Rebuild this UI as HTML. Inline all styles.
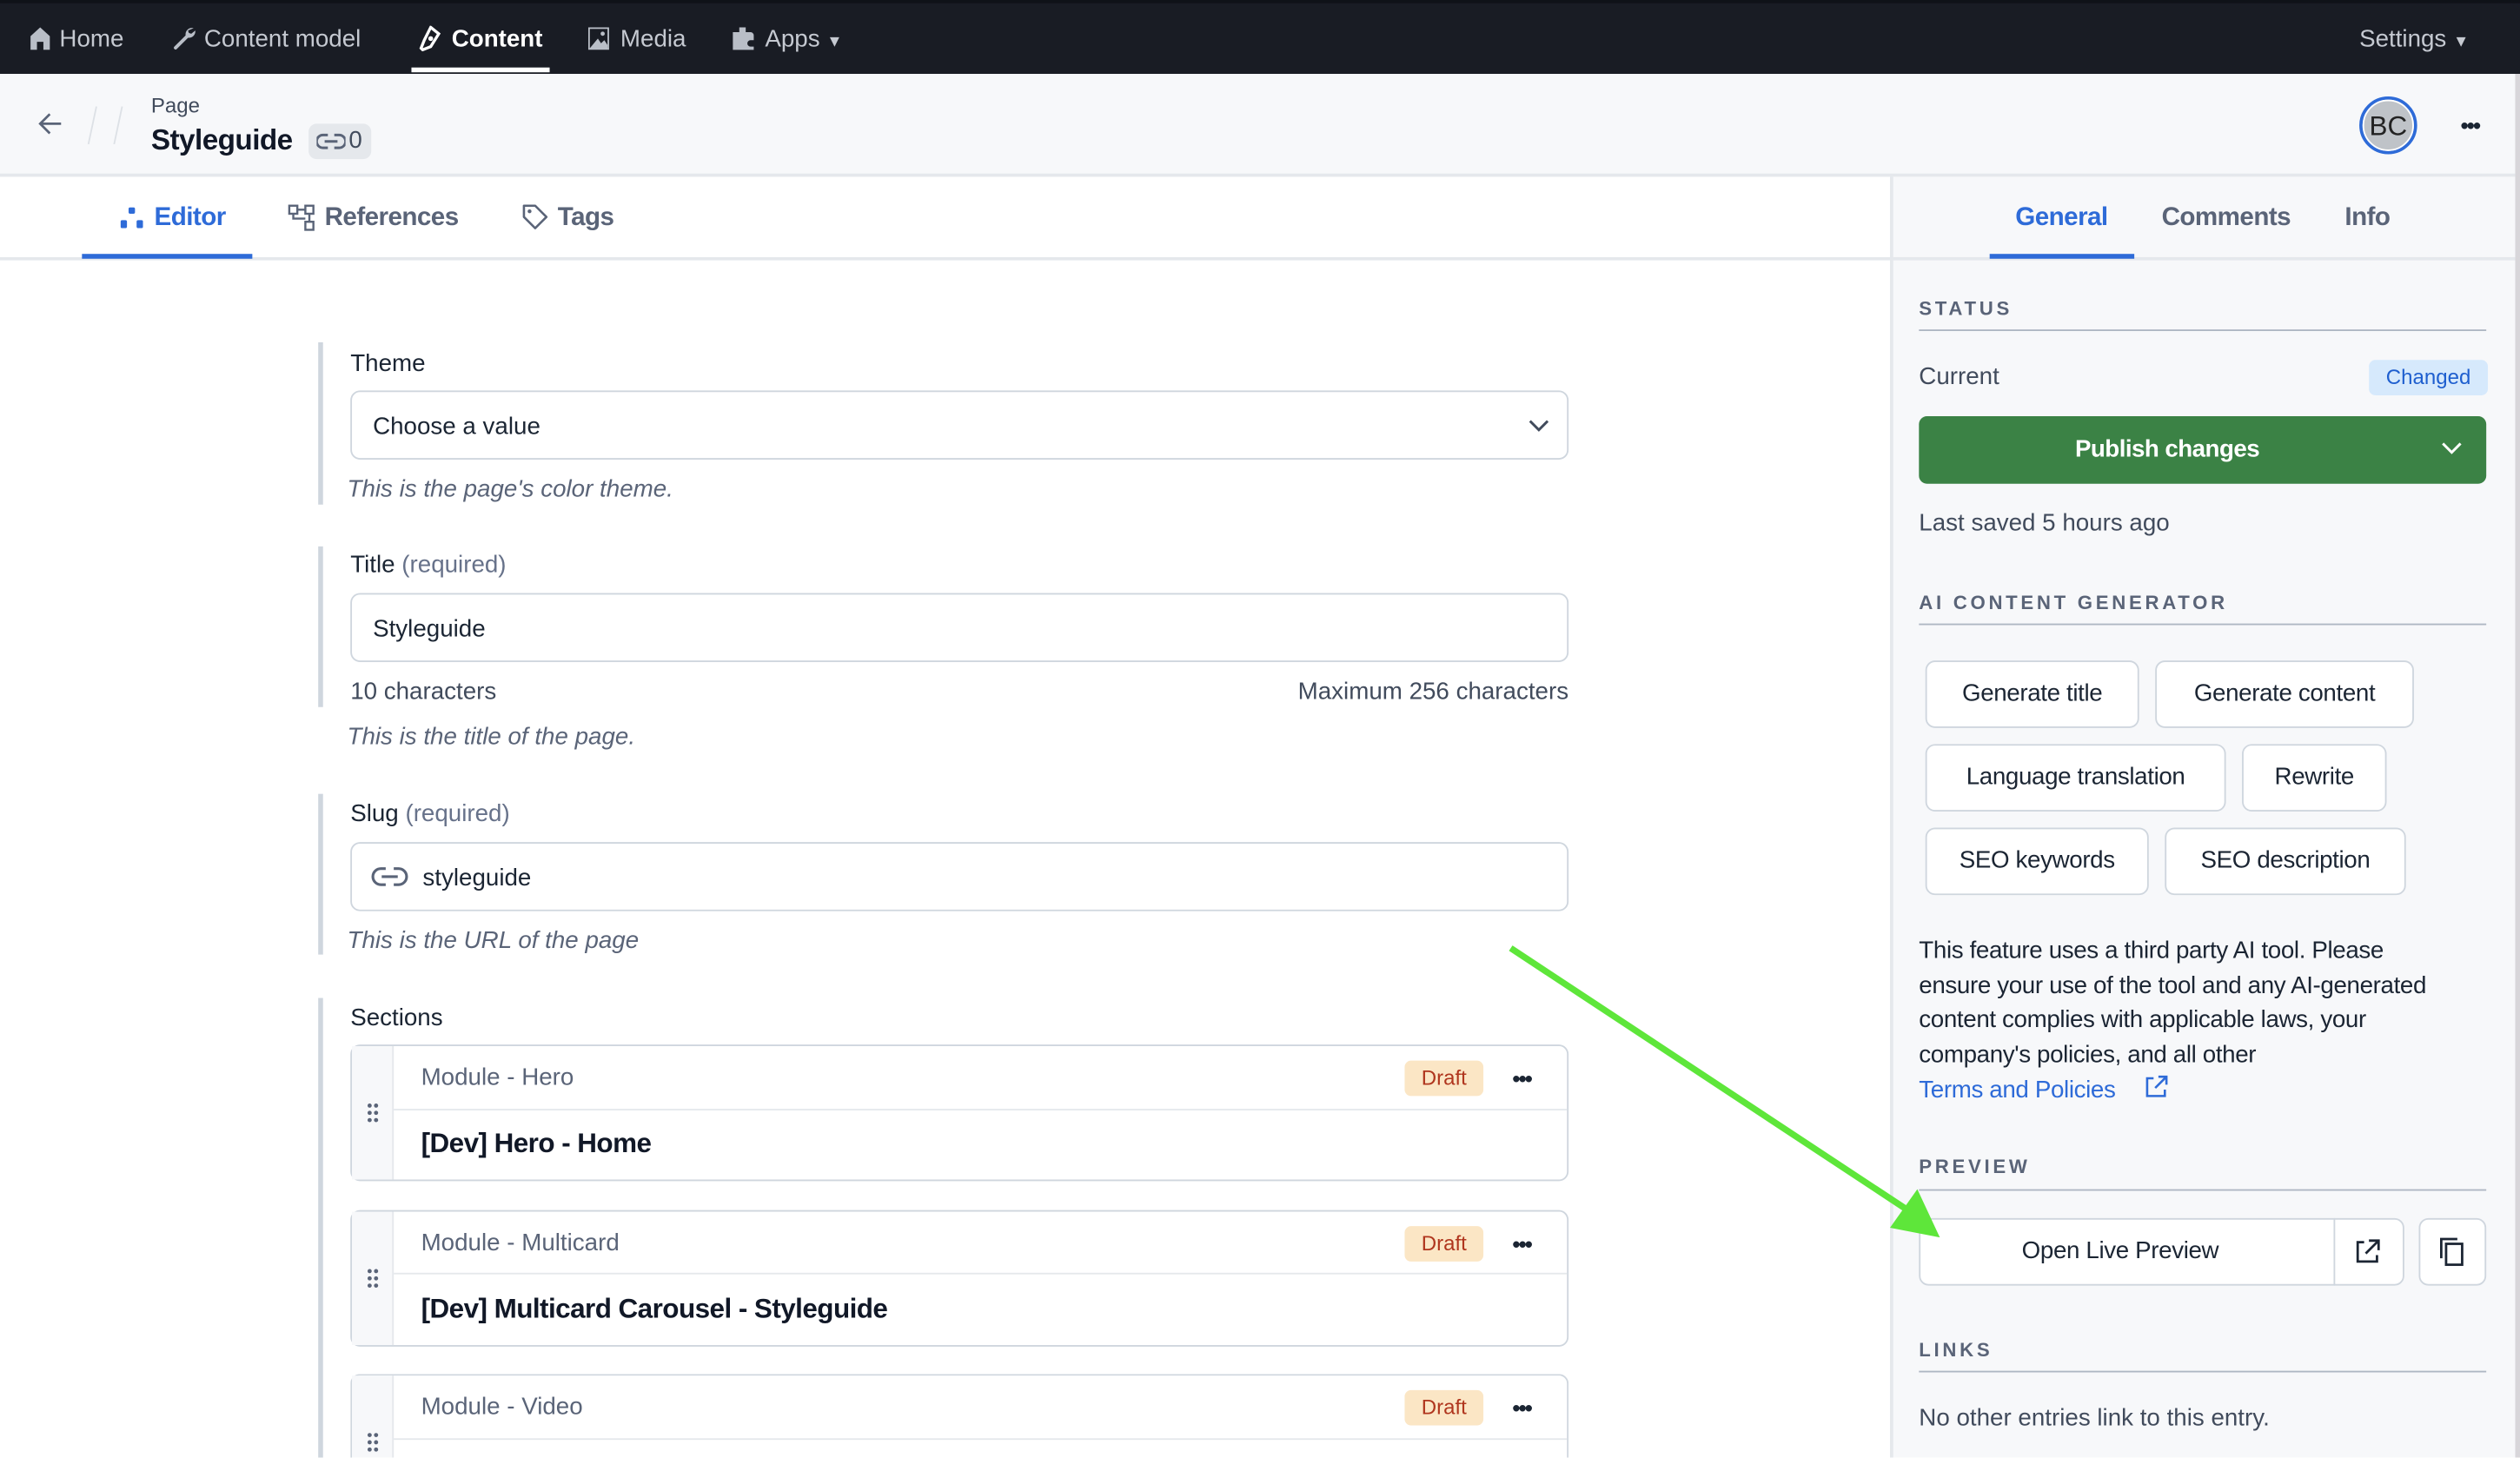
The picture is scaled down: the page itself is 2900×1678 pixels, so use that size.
<!DOCTYPE html>
<html><head><meta charset="utf-8"><style>
*{box-sizing:border-box;margin:0;padding:0}
html,body{width:2900px;height:1678px;overflow:hidden;background:#fff}
#w{position:absolute;left:0;top:0;width:1568px;height:907px;transform:scale(1.8495);transform-origin:0 0;font-family:"Liberation Sans",sans-serif;color:#1b2533;font-size:15px;overflow:hidden}
.a{position:absolute;white-space:nowrap}
.nav{background:#191c24;left:0;top:0;width:1568px;height:46px;border-top:2px solid #0f1218}
.nv{color:#c5c9d1;font-size:15px;top:16px}
.lbl{font-size:15px;color:#1b2533}
.req{color:#67728a}
.help{font-style:italic;color:#5a6478;font-size:15px}
.inp{border:1px solid #cfd6de;border-radius:6px;background:#fff;height:43px}
.btn{border:1px solid #cfd6de;border-radius:6px;background:#fff;height:42px;font-size:15px;text-align:center;line-height:40px;color:#1b2533;letter-spacing:-0.2px}
.card{left:218px;width:758px;border:1px solid #cfd6de;border-radius:6px;background:#fff;overflow:hidden}
.draft{background:#fbe6c5;color:#b0361e;font-size:13px;border-radius:4px;width:49px;text-align:center;height:22px;line-height:22px}
.sec{font-size:12px;letter-spacing:2px;color:#5a6478;font-weight:bold}
.hl{height:1px;background:#aeb7c3}
.dots{font-size:14px;font-weight:bold;letter-spacing:-1px;line-height:10px}
</style></head><body><div id="w">
<div class="a nav"></div>
<svg class="a" style="left:18px;top:16px" width="14" height="15" viewBox="0 0 14 15"><path d="M7 1L1 6.5V15H5V10H9V15H13V6.5Z" fill="#b9bec7"/></svg>
<div class="a nv" style="left:37px">Home</div>
<svg class="a" style="left:107px;top:16px" width="15" height="15" viewBox="0 0 15 15"><path d="M13.5 1.5a4 4 0 0 0-5 4.5L1.5 13a1 1 0 0 0 1.5 1.5L10 7.5a4 4 0 0 0 4.5-4.5L12 5 10.5 4.5 10 3z" fill="#b9bec7"/></svg>
<div class="a nv" style="left:127px">Content model</div>
<svg class="a" style="left:260px;top:16px" width="15" height="16" viewBox="0 0 15 16"><path d="M8 1L13 5 8 13 3 15 2 14 4 9Z" fill="none" stroke="#fff" stroke-width="1.8"/><circle cx="8" cy="8" r="1.5" fill="#fff"/></svg>
<div class="a nv" style="left:281px;color:#fff;font-weight:bold">Content</div>
<div class="a" style="left:256px;top:42px;width:86px;height:3px;background:#fff"></div>
<svg class="a" style="left:366px;top:17px" width="13" height="14" viewBox="0 0 13 14"><rect x="0.5" y="0.5" width="12" height="13" fill="none" stroke="#b9bec7"/><path d="M1 13L6 7 8 10 10 8 12 11V13Z" fill="#b9bec7"/><circle cx="9" cy="4" r="1.3" fill="#b9bec7"/></svg>
<div class="a nv" style="left:386px">Media</div>
<svg class="a" style="left:455px;top:16px" width="15" height="16" viewBox="0 0 15 16"><path d="M5 1h4v3h3a2 2 0 0 1 2 2v3h-2a2 2 0 0 0 0 4h2v2H1V4h4z" fill="#b9bec7"/></svg>
<div class="a nv" style="left:476px">Apps <span style="font-size:10px">▼</span></div>
<div class="a nv" style="left:1468px">Settings <span style="font-size:10px">▼</span></div>
<div class="a" style="left:0;top:46px;width:1565px;height:64px;background:#f7f8fa;border-bottom:2px solid #e5e8ec"></div>
<div class="a" style="left:1565px;top:46px;width:3px;height:861px;background:#d8d6da"></div>
<svg class="a" style="left:23px;top:69px" width="16" height="16" viewBox="0 0 16 16"><path d="M15 8H2M8 2L2 8l6 6" fill="none" stroke="#5a6478" stroke-width="1.5"/></svg>
<div class="a" style="left:57px;top:66px;width:1px;height:24px;background:#dde1e6;transform:rotate(12deg)"></div>
<div class="a" style="left:73px;top:66px;width:1px;height:24px;background:#dde1e6;transform:rotate(12deg)"></div>
<div class="a" style="left:94px;top:58px;font-size:13px;color:#414b5c">Page</div>
<div class="a" style="left:94px;top:77px;font-size:18px;font-weight:bold;color:#111827;letter-spacing:-0.3px">Styleguide</div>
<div class="a" style="left:192px;top:77px;width:39px;height:22px;background:#e5e8ec;border-radius:5px;font-size:15px;color:#414b5c;padding:2px 0 0 25px">0</div>
<svg class="a" style="left:197px;top:82px" width="18" height="12" viewBox="0 0 18 12"><path d="M7 2H4a4 4 0 0 0 0 8h3M11 2h3a4 4 0 0 1 0 8h-3M5 6h8" fill="none" stroke="#5a6478" stroke-width="1.6"/></svg>
<div class="a" style="left:1468px;top:60px;width:36px;height:36px;border-radius:50%;border:2px solid #2e6bd8;background:#bfc3c8;text-align:center;line-height:31px;font-size:17px;color:#222"><span style="border:1px solid #fff;border-radius:50%;display:block;width:32px;height:32px">BC</span></div>
<div class="a dots" style="left:1531px;top:73px">•••</div>
<div class="a" style="left:0;top:160px;width:1176px;height:2px;background:#e5e8ec"></div>
<div class="a" style="left:51px;top:158px;width:106px;height:3px;background:#2e6bd8"></div>
<svg class="a" style="left:75px;top:129px" width="14" height="13" viewBox="0 0 14 13"><rect x="5" y="0" width="4" height="4" rx="1" fill="#2e6bd8"/><rect x="0" y="8" width="4" height="5" rx="1" fill="#2e6bd8"/><rect x="10" y="8" width="4" height="5" rx="1" fill="#2e6bd8"/></svg>
<div class="a" style="left:96px;top:127px;font-size:16px;color:#2e6bd8;font-weight:bold;letter-spacing:-0.3px">Editor</div>
<svg class="a" style="left:179px;top:127px" width="17" height="17" viewBox="0 0 17 17"><g fill="none" stroke="#5a6478" stroke-width="1.3"><rect x="1" y="1" width="5" height="5"/><rect x="11" y="1" width="5" height="5"/><rect x="11" y="11" width="5" height="5"/><path d="M6 3.5h5M13.5 6v5M3.5 6v3h7.5"/></g></svg>
<div class="a" style="left:202px;top:127px;font-size:16px;color:#5a6478;font-weight:bold;letter-spacing:-0.3px">References</div>
<svg class="a" style="left:324px;top:126px" width="18" height="18" viewBox="0 0 18 18"><path d="M2 2h7l7 7-7 7-7-7z" fill="none" stroke="#5a6478" stroke-width="1.4" stroke-linejoin="round"/><circle cx="5.5" cy="5.5" r="1.2" fill="#5a6478"/></svg>
<div class="a" style="left:347px;top:127px;font-size:16px;color:#5a6478;font-weight:bold;letter-spacing:-0.3px">Tags</div>
<div class="a" style="left:1176px;top:110px;width:389px;height:797px;background:#f7f8fa;border-left:2px solid #e5e8ec"></div>
<div class="a" style="left:1176px;top:160px;width:389px;height:2px;background:#e5e8ec"></div>
<div class="a" style="left:1238px;top:158px;width:90px;height:3px;background:#2e6bd8"></div>
<div class="a" style="left:1254px;top:127px;font-size:16px;color:#2e6bd8;font-weight:bold;letter-spacing:-0.3px">General</div>
<div class="a" style="left:1345px;top:127px;font-size:16px;color:#5a6478;font-weight:bold;letter-spacing:-0.3px">Comments</div>
<div class="a" style="left:1459px;top:127px;font-size:16px;color:#5a6478;font-weight:bold;letter-spacing:-0.3px">Info</div>
<div class="a sec" style="left:1194px;top:185px">STATUS</div>
<div class="a hl" style="left:1194px;top:205px;width:353px"></div>
<div class="a" style="left:1194px;top:226px;color:#414b5c">Current</div>
<div class="a" style="left:1474px;top:224px;width:74px;height:22px;background:#d6e9fc;color:#1f5fcf;border-radius:4px;font-size:13px;text-align:center;line-height:22px">Changed</div>
<div class="a" style="left:1194px;top:259px;width:353px;height:42px;background:#3b8245;border-radius:5px;color:#fff;font-weight:bold;text-align:center;line-height:42px;font-size:15px;padding-right:44px;letter-spacing:-0.3px">Publish changes</div>
<svg class="a" style="left:1519px;top:275px" width="13" height="8" viewBox="0 0 13 8"><path d="M1 1l5.5 5.5L12 1" fill="none" stroke="#fff" stroke-width="1.6"/></svg>
<div class="a" style="left:1194px;top:317px;color:#414b5c">Last saved 5 hours ago</div>
<div class="a sec" style="left:1194px;top:368px">AI CONTENT GENERATOR</div>
<div class="a hl" style="left:1194px;top:388px;width:353px"></div>
<div class="a btn" style="left:1198px;top:411px;width:133px">Generate title</div>
<div class="a btn" style="left:1341px;top:411px;width:161px">Generate content</div>
<div class="a btn" style="left:1198px;top:463px;width:187px">Language translation</div>
<div class="a btn" style="left:1395px;top:463px;width:90px">Rewrite</div>
<div class="a btn" style="left:1198px;top:515px;width:139px">SEO keywords</div>
<div class="a btn" style="left:1347px;top:515px;width:150px">SEO description</div>
<div class="a" style="left:1194px;top:581px;line-height:21.7px;color:#1b2533;white-space:normal;width:332px;letter-spacing:-0.2px">This feature uses a third party AI tool. Please ensure your use of the tool and any AI-generated content complies with applicable laws, your company's policies, and all other<br><span style="color:#2e6bd8">Terms and Policies</span></div>
<svg class="a" style="left:1334px;top:669px" width="15" height="15" viewBox="0 0 15 15"><path d="M6 2H2v11h11V9M9 1h5v5M14 1L7 8" fill="none" stroke="#2e6bd8" stroke-width="1.4"/></svg>
<div class="a sec" style="left:1194px;top:719px">PREVIEW</div>
<div class="a hl" style="left:1194px;top:740px;width:353px"></div>
<div class="a btn" style="left:1194px;top:758px;width:302px;text-align:left;padding-left:63px">Open Live Preview</div>
<div class="a" style="left:1452px;top:758px;width:1px;height:42px;background:#cfd6de"></div>
<svg class="a" style="left:1465px;top:771px" width="16" height="16" viewBox="0 0 16 16"><path d="M6 2H2v12h12v-4M9 1h6v6M15 1L7 9" fill="none" stroke="#1b2533" stroke-width="1.5"/></svg>
<div class="a btn" style="left:1505px;top:758px;width:42px"></div>
<svg class="a" style="left:1517px;top:770px" width="17" height="18" viewBox="0 0 17 18"><rect x="5" y="4" width="10" height="13" fill="none" stroke="#1b2533" stroke-width="1.5"/><path d="M2 13V1h10" fill="none" stroke="#1b2533" stroke-width="1.5"/></svg>
<div class="a sec" style="left:1194px;top:833px">LINKS</div>
<div class="a hl" style="left:1194px;top:853px;width:353px"></div>
<div class="a" style="left:1194px;top:874px;color:#414b5c">No other entries link to this entry.</div>
<div class="a" style="left:198px;top:213px;width:3px;height:101px;background:#cfd6de"></div>
<div class="a lbl" style="left:218px;top:218px">Theme</div>
<div class="a inp" style="left:218px;top:243px;width:758px;padding:13px 13px;color:#1b2533">Choose a value</div>
<svg class="a" style="left:951px;top:261px" width="13" height="8" viewBox="0 0 13 8"><path d="M1 1l5.5 5.5L12 1" fill="none" stroke="#414b5c" stroke-width="1.6"/></svg>
<div class="a help" style="left:216px;top:296px">This is the page's color theme.</div>
<div class="a" style="left:198px;top:340px;width:3px;height:100px;background:#cfd6de"></div>
<div class="a lbl" style="left:218px;top:343px">Title <span class="req">(required)</span></div>
<div class="a inp" style="left:218px;top:369px;width:758px;padding:13px 13px">Styleguide</div>
<div class="a" style="left:218px;top:422px;color:#414b5c">10 characters</div>
<div class="a" style="left:976px;top:422px;color:#414b5c;transform:translateX(-100%)">Maximum 256 characters</div>
<div class="a help" style="left:216px;top:450px">This is the title of the page.</div>
<div class="a" style="left:198px;top:494px;width:3px;height:100px;background:#cfd6de"></div>
<div class="a lbl" style="left:218px;top:498px">Slug <span class="req">(required)</span></div>
<div class="a inp" style="left:218px;top:524px;width:758px;padding:13px 0 0 44px">styleguide</div>
<svg class="a" style="left:231px;top:539px" width="23" height="13" viewBox="0 0 23 13"><path d="M9 1.5H6a5 5 0 0 0 0 10h3M14 1.5h3a5 5 0 0 1 0 10h-3M6.5 6.5h10" fill="none" stroke="#5a6478" stroke-width="1.7"/></svg>
<div class="a help" style="left:216px;top:577px">This is the URL of the page</div>
<div class="a" style="left:198px;top:621px;width:3px;height:286px;background:#cfd6de"></div>
<div class="a lbl" style="left:218px;top:625px">Sections</div>
<div class="a card" style="top:650px;height:85px"></div>
<div class="a card" style="top:753px;height:85px"></div>
<div class="a card" style="top:855px;height:52px;border-bottom:none;border-radius:6px 6px 0 0"></div>
<div class="a" style="left:219px;top:651px;width:26px;height:83px;background:#f7f8fa;border-right:1px solid #e5e8ec"></div>
<div class="a" style="left:219px;top:754px;width:26px;height:83px;background:#f7f8fa;border-right:1px solid #e5e8ec"></div>
<div class="a" style="left:219px;top:856px;width:26px;height:51px;background:#f7f8fa;border-right:1px solid #e5e8ec"></div>
<div class="a" style="left:245px;top:690px;width:730px;height:1px;background:#e5e8ec"></div>
<div class="a" style="left:245px;top:792px;width:730px;height:1px;background:#e5e8ec"></div>
<div class="a" style="left:245px;top:895px;width:730px;height:1px;background:#e5e8ec"></div>
<svg class="a" style="left:228px;top:686px" width="8" height="13" viewBox="0 0 8 13"><g fill="#5a6478"><circle cx="2" cy="2" r="1.3"/><circle cx="6" cy="2" r="1.3"/><circle cx="2" cy="6.5" r="1.3"/><circle cx="6" cy="6.5" r="1.3"/><circle cx="2" cy="11" r="1.3"/><circle cx="6" cy="11" r="1.3"/></g></svg>
<svg class="a" style="left:228px;top:789px" width="8" height="13" viewBox="0 0 8 13"><g fill="#5a6478"><circle cx="2" cy="2" r="1.3"/><circle cx="6" cy="2" r="1.3"/><circle cx="2" cy="6.5" r="1.3"/><circle cx="6" cy="6.5" r="1.3"/><circle cx="2" cy="11" r="1.3"/><circle cx="6" cy="11" r="1.3"/></g></svg>
<svg class="a" style="left:228px;top:891px" width="8" height="13" viewBox="0 0 8 13"><g fill="#5a6478"><circle cx="2" cy="2" r="1.3"/><circle cx="6" cy="2" r="1.3"/><circle cx="2" cy="6.5" r="1.3"/><circle cx="6" cy="6.5" r="1.3"/><circle cx="2" cy="11" r="1.3"/><circle cx="6" cy="11" r="1.3"/></g></svg>
<div class="a" style="left:262px;top:662px;color:#5a6478">Module - Hero</div>
<div class="a" style="left:262px;top:765px;color:#5a6478">Module - Multicard</div>
<div class="a" style="left:262px;top:867px;color:#5a6478">Module - Video</div>
<div class="a draft" style="left:874px;top:660px">Draft</div>
<div class="a draft" style="left:874px;top:763px">Draft</div>
<div class="a draft" style="left:874px;top:865px">Draft</div>
<div class="a dots" style="left:941px;top:666px">•••</div>
<div class="a dots" style="left:941px;top:769px">•••</div>
<div class="a dots" style="left:941px;top:871px">•••</div>
<div class="a" style="left:262px;top:702px;font-size:17px;font-weight:bold;color:#111827;letter-spacing:-0.3px">[Dev] Hero - Home</div>
<div class="a" style="left:262px;top:805px;font-size:17px;font-weight:bold;color:#111827;letter-spacing:-0.3px">[Dev] Multicard Carousel - Styleguide</div>
<svg class="a" style="left:0;top:0" width="1568" height="907" viewBox="0 0 1568 907"><path d="M940 590L1190 755" stroke="#5ee63a" stroke-width="4" fill="none"/><path d="M1207 770L1176 764 1193 740Z" fill="#5ee63a"/></svg>
</div></body></html>
